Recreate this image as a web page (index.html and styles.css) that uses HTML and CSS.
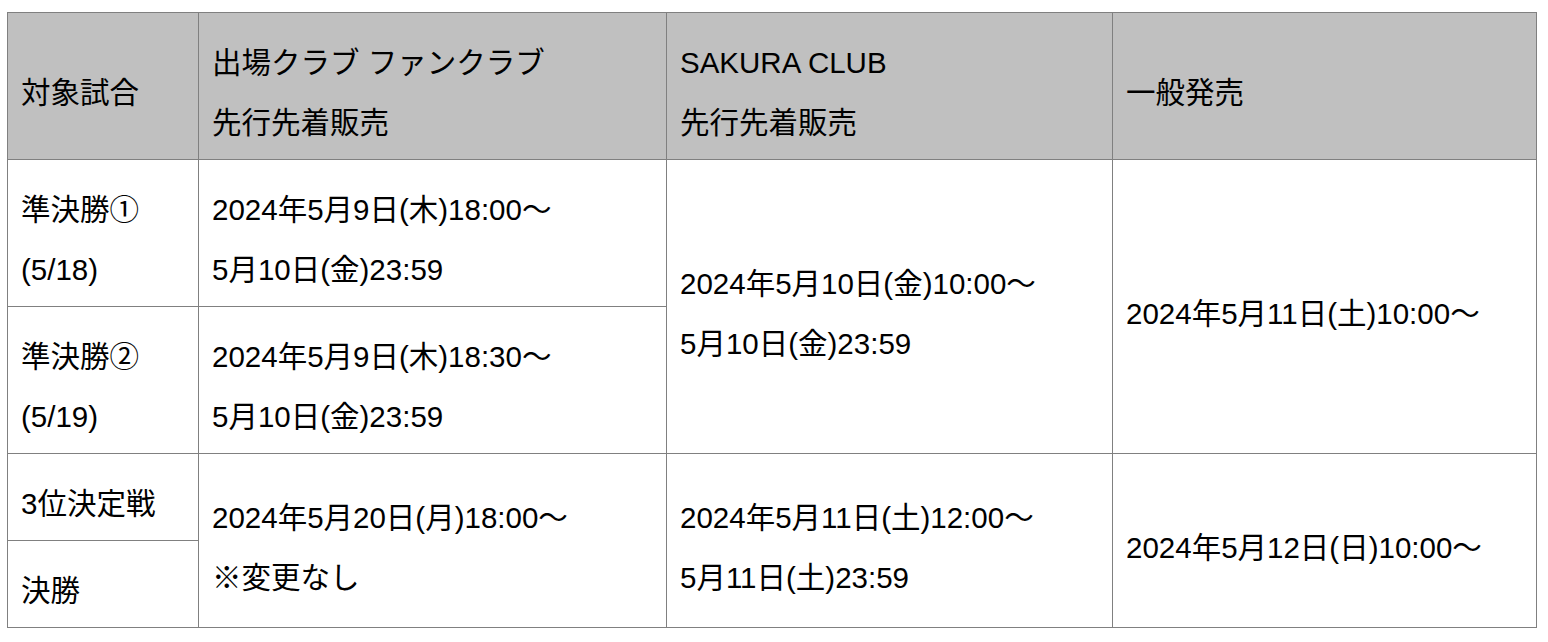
FILE: index.html
```html
<!DOCTYPE html>
<html lang="ja">
<head>
<meta charset="utf-8">
<link rel="stylesheet" href="styles.css">
</head>
<body>
<table class="schedule">
  <colgroup>
    <col class="c1">
    <col class="c2">
    <col class="c3">
    <col class="c4">
  </colgroup>
  <thead>
    <tr>
      <th>対象試合</th>
      <th>出場クラブ ファンクラブ<br>先行先着販売</th>
      <th>SAKURA CLUB<br>先行先着販売</th>
      <th>一般発売</th>
    </tr>
  </thead>
  <tbody>
    <tr>
      <td>準決勝①<br>(5/18)</td>
      <td>2024年5月9日(木)18:00～<br>5月10日(金)23:59</td>
      <td rowspan="2">2024年5月10日(金)10:00～<br>5月10日(金)23:59</td>
      <td rowspan="2">2024年5月11日(土)10:00～</td>
    </tr>
    <tr>
      <td>準決勝②<br>(5/19)</td>
      <td>2024年5月9日(木)18:30～<br>5月10日(金)23:59</td>
    </tr>
    <tr>
      <td>3位決定戦</td>
      <td rowspan="2">2024年5月20日(月)18:00～<br>※変更なし</td>
      <td rowspan="2">2024年5月11日(土)12:00～<br>5月11日(土)23:59</td>
      <td rowspan="2">2024年5月12日(日)10:00～</td>
    </tr>
    <tr>
      <td>決勝</td>
    </tr>
  </tbody>
</table>
</body>
</html>
```
FILE: styles.css
```css
html, body {
  margin: 0;
  padding: 0;
  background: #ffffff;
}

body {
  padding: 12px 0 0 7px;
  font-family: "Liberation Sans", "Noto Sans CJK JP", sans-serif;
  color: #000000;
}

.schedule {
  border-collapse: collapse;
  table-layout: fixed;
  width: 1529px;
}

.c1 { width: 191px; }
.c2 { width: 468px; }
.c3 { width: 446px; }
.c4 { width: 424px; }

.schedule th,
.schedule td {
  border: 1px solid #808080;
  padding: 20px 13px 6px 13px;
  font-size: 29.5px;
  line-height: 60px;
  font-weight: normal;
  text-align: left;
  vertical-align: middle;
  white-space: nowrap;
}

.schedule th {
  background: #c0c0c0;
}
```
